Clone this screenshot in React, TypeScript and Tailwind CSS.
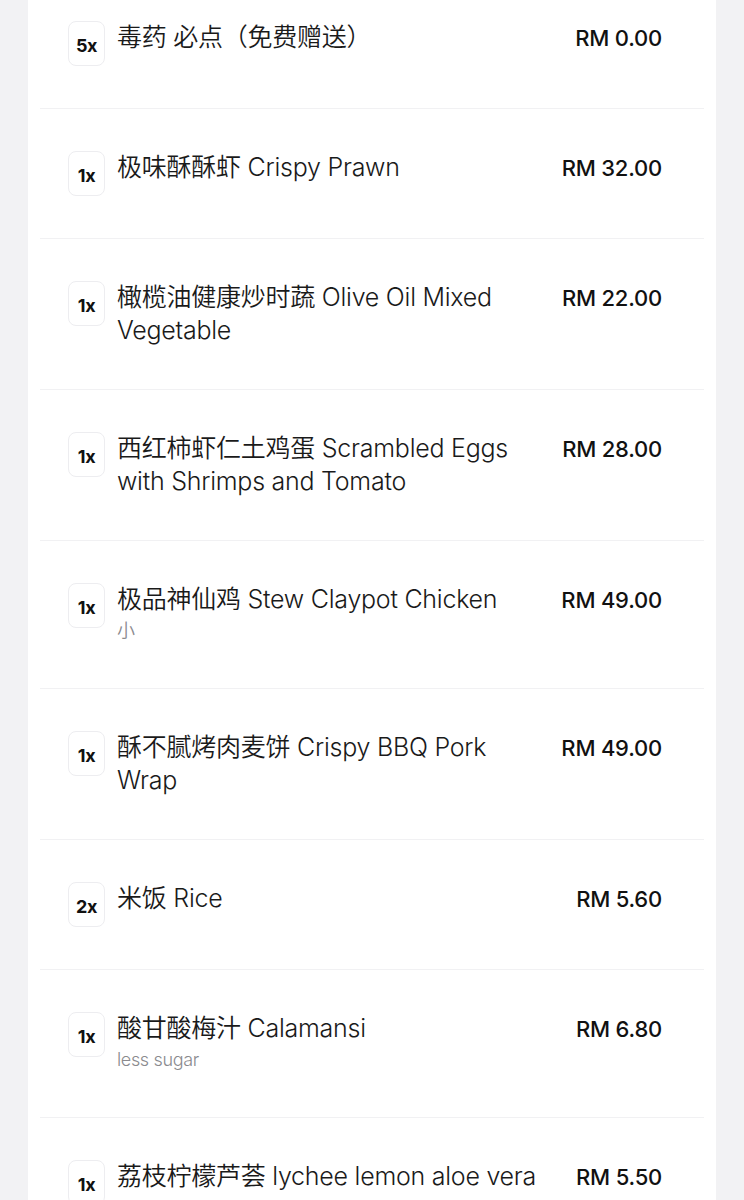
import React from 'react';

type Item = {
  qty: number;
  name: string;
  note?: string;
  price: string;
};

const items: Item[] = [
  { qty: 5, name: '毒药 必点（免费赠送）', price: '0.00' },
  { qty: 1, name: '极味酥酥虾 Crispy Prawn', price: '32.00' },
  { qty: 1, name: '橄榄油健康炒时蔬 Olive Oil Mixed Vegetable', price: '22.00' },
  { qty: 1, name: '西红柿虾仁土鸡蛋 Scrambled Eggs with Shrimps and Tomato', price: '28.00' },
  { qty: 1, name: '极品神仙鸡 Stew Claypot Chicken', note: '小', price: '49.00' },
  { qty: 1, name: '酥不腻烤肉麦饼 Crispy BBQ Pork Wrap', price: '49.00' },
  { qty: 2, name: '米饭 Rice', price: '5.60' },
  { qty: 1, name: '酸甘酸梅汁 Calamansi', note: 'less sugar', price: '6.80' },
  { qty: 1, name: '荔枝柠檬芦荟 lychee lemon aloe vera', price: '5.50' },
];

const OrderRow: React.FC<{ item: Item }> = ({ item }) => (
  <div className="flex items-start pl-[28px] pr-[42px] py-[42px] border-b border-[#f1f1f3]">
    <div className="w-[37px] h-[45px] shrink-0 flex items-center justify-center pt-[3px] rounded-lg border border-[#ededf0] text-[18px] font-bold text-[#111] tracking-tight">
      {item.qty}x
    </div>
    <div className="flex-1 min-w-0 ml-3 pr-6">
      <p className="text-[25px] leading-[33px] font-[350] text-[#1a1a1a] tracking-[-0.01em]">{item.name}</p>
      {item.note && (
        <p className="text-[18px] leading-[30px] font-[350] text-[#8a8a8e] tracking-[-0.02em]">{item.note}</p>
      )}
    </div>
    <div className="shrink-0 text-[22px] leading-[34px] font-medium text-[#111] tracking-[-0.01em] whitespace-nowrap">
      RM {item.price}
    </div>
  </div>
);

const App: React.FC = () => {
  return (
    <div
      className="h-[1200px] overflow-hidden bg-[#f2f2f4] px-[28px]"
      style={{ fontFamily: 'Inter, "Noto Sans CJK SC", sans-serif' }}
    >
      <div className="flex flex-col h-full bg-white px-3">
        <div className="-mt-[21px]">
          {items.map((item, i) => (
            <OrderRow key={i} item={item} />
          ))}
        </div>
      </div>
    </div>
  );
};

export default App;
